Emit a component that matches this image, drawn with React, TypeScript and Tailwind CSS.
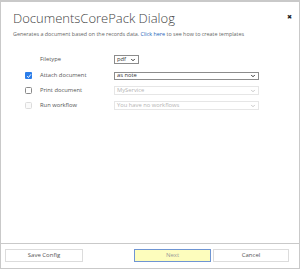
import { ChevronDown } from "lucide-react";

function Chevron({ muted }: { muted?: boolean }) {
  return (
    <ChevronDown
      className={muted ? "h-[6px] w-[6px] text-[#c8c8c8]" : "h-[6px] w-[6px] text-[#333]"}
      strokeWidth={4}
    />
  );
}

function Check({ state }: { state: "checked" | "empty" | "disabled" }) {
  if (state === "checked") {
    return (
      <div className="flex h-[7px] w-[7px] items-center justify-center rounded-[1px] bg-[#2b7de9]">
        <svg viewBox="0 0 8 8" className="h-[6px] w-[6px]">
          <path d="M1.5 4.2 L3.3 6 L6.6 1.8" fill="none" stroke="white" strokeWidth="1.3" />
        </svg>
      </div>
    );
  }
  return (
    <div
      className={
        state === "empty"
          ? "h-[7px] w-[7px] rounded-[1.5px] border border-[#8a8a8a] bg-white"
          : "h-[7px] w-[7px] rounded-[1.5px] border border-[#dcdcdc] bg-[#fafafa]"
      }
    />
  );
}

function Row({
  label,
  check,
  value,
  disabled,
}: {
  label: string;
  check: "checked" | "empty" | "disabled";
  value: string;
  disabled?: boolean;
}) {
  return (
    <div className="flex h-[15px] items-center">
      <div className="flex w-[39px] justify-start pl-[24px]">
        <Check state={check} />
      </div>
      <span className="w-[74px] text-[5.8px] text-[#555]">{label}</span>
      <div
        className={
          disabled
            ? "flex h-[9px] w-[145px] items-center justify-between border border-[#e6e6e6] px-[2px] text-[5.8px] text-[#b4b4b4]"
            : "flex h-[8px] w-[145px] items-center justify-between border border-[#8c8c8c] px-[2px] text-[5.8px] text-[#333]"
        }
      >
        <span>{value}</span>
        <Chevron muted={disabled} />
      </div>
    </div>
  );
}

export default function App() {
  return (
    <div
      className="flex h-[269px] w-[300px] flex-col border-x border-t-2 border-b border-[#c9c9c9] bg-white"
      style={{ fontFamily: '"Open Sans", "Noto Sans", sans-serif' }}
    >
      <div className="flex items-start justify-between pl-[12px] pr-[7px] pt-[8px]">
        <h1 className="text-[13px] font-light leading-[17px] text-[#444]">DocumentsCorePack Dialog</h1>
        <span className="pt-[3px] text-[6px] text-[#222]">✖</span>
      </div>
      <p className="mt-[3px] pl-[12px] text-[5.4px] text-[#666]">
        Generates a document based on the records data. <span className="text-[#1d62b8]">Click here</span> to see how to create templates
      </p>

      <div className="mt-[16px] flex flex-col">
        <div className="flex h-[11px] items-center">
          <span className="w-[113px] pl-[39px] text-[5.8px] text-[#555]">Filetype</span>
          <div className="flex h-[9px] w-[25px] items-center justify-between border border-[#8c8c8c] px-[2px] text-[5.8px] text-[#333]">
            <span>pdf</span>
            <Chevron />
          </div>
        </div>
        <div className="mt-[3px]">
          <Row label="Attach document" check="checked" value="as note" />
          <Row label="Print document" check="empty" value="MyService" disabled />
          <Row label="Run workflow" check="disabled" value="You have no workflows" disabled />
        </div>
      </div>

      <div className="mt-auto border-t border-[#c9c9c9] px-[4px] pb-[6px] pt-[5px]">
        <div className="flex items-center text-[6px] text-[#555]">
          <button className="h-[13px] w-[78px] border border-[#dcdcdc] bg-white">Save Config</button>
          <button className="ml-[51px] h-[13px] w-[77px] border border-[#6f95d3] bg-[#fdfdbd] text-[#999]">Next</button>
          <button className="ml-[2px] h-[13px] w-[76px] border border-[#dcdcdc] bg-white">Cancel</button>
        </div>
      </div>
    </div>
  );
}
